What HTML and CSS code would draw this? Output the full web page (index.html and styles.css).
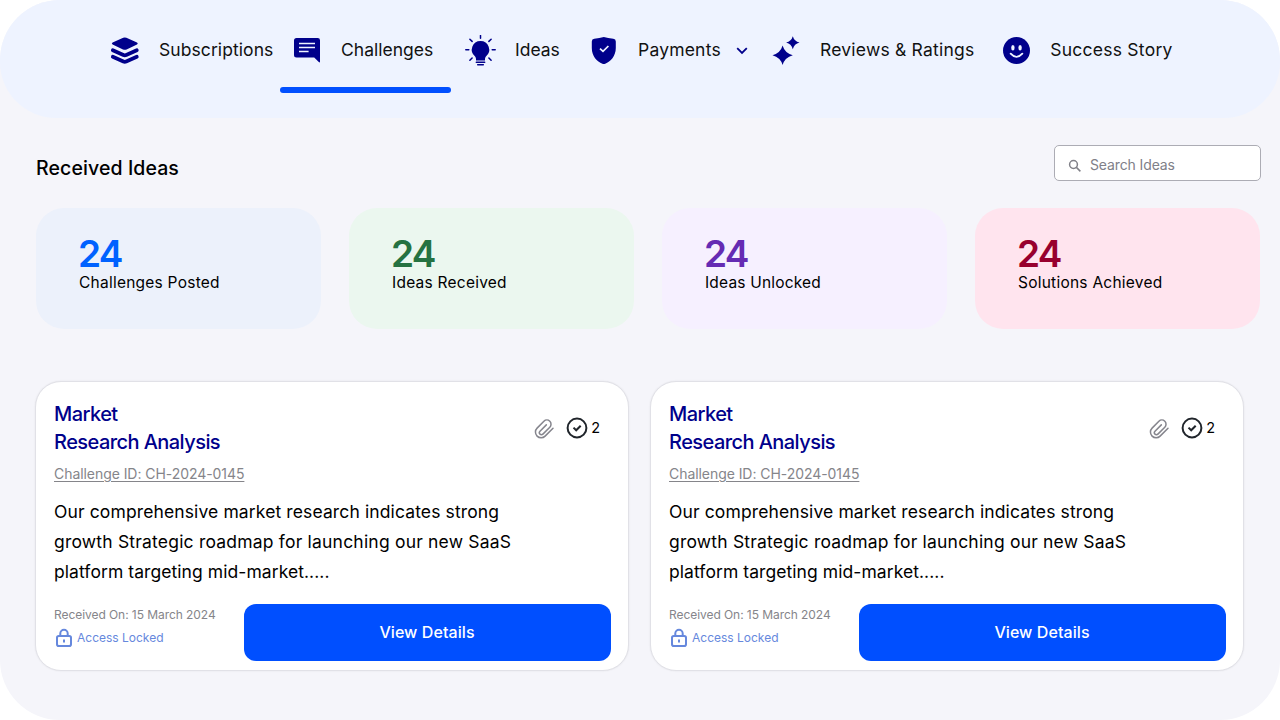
FILE: index.html
```html
<!DOCTYPE html>
<html lang="en">
<head>
<meta charset="utf-8">
<title>Received Ideas</title>
<link rel="stylesheet" href="styles.css">
</head>
<body>
<div class="app">
  <nav class="nav">
    <a class="nav-item"><svg class="nav-icon" viewBox="0 0 30 32"><path d="M13.200 2.800Q14.800 2 16.400 2.800L27 7.400Q28.600 8.400 27 9.400L16.600 14.400Q14.800 15.200 13 14.400L2.600 9.400Q1 8.400 2.600 7.400Z"/><path d="M2.800 15.200L13.400 20Q14.800 20.600 16.200 20L26.800 15.200M2.800 21.700L13.400 26.500Q14.800 27.100 16.200 26.500L26.800 21.700" fill="none" stroke="#00008b" stroke-width="3.700" stroke-linecap="round"/></svg><span class="nav-label l-sub">Subscriptions</span></a>
    <a class="nav-item active"><svg class="nav-icon" viewBox="0 0 30 32"><path d="M4.500 3h21.200a2.300 2.300 0 0 1 2.300 2.300V26.600q0 1.600-1.200.5L22.200 22.500H4.500A2.500 2.500 0 0 1 2 20V5.500A2.500 2.500 0 0 1 4.500 3Z"/><path d="M7 8.600h16M7 12.600h16M7 16.600h9.600" stroke="#eef3ff" stroke-width="1.500"/></svg><span class="nav-label l-cha">Challenges</span></a>
    <a class="nav-item"><svg class="nav-icon bulb" viewBox="0 0 32 32"><path d="M15.500 6a8.700 8.700 0 0 1 5.400 15.500Q20 22.500 20 24v1.400h-9V24q0-1.500-.9-2.500A8.700 8.700 0 0 1 15.500 6Z"/><path d="M11.300 27.300h8.400M12.700 29.800h5.600M15.500.5v2.800M.8 14.700h3M27.200 14.700h3M4.900 4.200l2.200 2.200M26.100 4.200l-2.200 2.200M4.900 25.200l2.200-2.200M26.100 25.200l-2.200-2.200" fill="none" stroke="#00008b" stroke-width="1.500" stroke-linecap="round"/></svg><span class="nav-label l-ide">Ideas</span></a>
    <a class="nav-item"><svg class="nav-icon" viewBox="0 0 30 32"><path d="M13.800 2Q18 3.200 23.300 3.800Q25.800 4 25.800 6.500V13C25.800 21 20.500 26.800 15.200 28.800Q13.800 29.300 12.400 28.800C7 26.800 1.800 21 1.800 13V6.500Q1.800 4 4.300 3.800Q9.600 3.200 13.800 2Z"/><path d="M10 13.600l3 2.800 5.400-5.400" fill="none" stroke="#eef3ff" stroke-width="1.700"/></svg><span class="nav-label l-pay">Payments</span><svg class="chevron" viewBox="0 0 14 10"><path d="M2.200 2.200L7 7l4.800-4.800" fill="none" stroke="#00008b" stroke-width="1.800"/></svg></a>
    <a class="nav-item"><svg class="nav-icon" viewBox="0 0 30 32"><path d="M10.600 10.500Q12.700 18 20.800 20.200Q12.700 22.400 10.600 30Q8.500 22.400.500 20.200Q8.500 18 10.600 10.500ZM20.800 1.200Q22.200 6.200 27.500 7.600Q22.200 9 20.800 14.200Q19.400 9 14.100 7.600Q19.400 6.200 20.800 1.200Z"/></svg><span class="nav-label l-rev">Reviews &amp; Ratings</span></a>
    <a class="nav-item"><svg class="nav-icon" viewBox="0 0 30 32"><circle cx="14.500" cy="15.500" r="13.500"/><ellipse cx="10.900" cy="12.800" rx="1.700" ry="2.800" fill="#eef3ff"/><ellipse cx="18.100" cy="12.800" rx="1.700" ry="2.800" fill="#eef3ff"/><path d="M8.700 18.700q5.800 6.400 11.600 0" fill="none" stroke="#eef3ff" stroke-width="1.900" stroke-linecap="round"/></svg><span class="nav-label l-suc">Success Story</span></a>
  </nav>
  <main class="main">
    <header class="head">
      <h1 class="title">Received Ideas</h1>
      <div class="search"><svg class="search-icon" viewBox="0 0 14 14"><circle cx="5.500" cy="5.500" r="3.900"/><path d="M8.400 8.400l4 4"/></svg><span class="search-text">Search Ideas</span></div>
    </header>
    <section class="stats">
      <div class="stat blue"><strong class="num">24</strong><span class="stat-label">Challenges Posted</span></div>
      <div class="stat green"><strong class="num">24</strong><span class="stat-label">Ideas Received</span></div>
      <div class="stat purple"><strong class="num">24</strong><span class="stat-label">Ideas Unlocked</span></div>
      <div class="stat pink"><strong class="num">24</strong><span class="stat-label">Solutions Achieved</span></div>
    </section>
    <section class="cards">
      <article class="card">
        <div class="card-top">
          <h2 class="card-title">Market<br>Research Analysis</h2>
          <div class="meta"><svg class="clip" viewBox="0 0 20 22"><path d="M19 10.200l-7.900 7.900a5.600 5.600 0 0 1-8-8l6.800-6.800a4.100 4.100 0 0 1 5.900 5.900l-6.900 6.900a2 2 0 0 1-2.900-2.900l6.300-6.300"/></svg><svg class="check" viewBox="0 0 22 22"><circle cx="11" cy="11" r="9.400"/><path d="M7.500 10.600l2.700 2.700 4.500-4.500"/></svg><span class="count">2</span></div>
        </div>
        <a class="cid">Challenge ID: CH-2024-0145</a>
        <p class="desc"><span class="d1">Our comprehensive market research indicates strong</span><br><span class="d2">growth Strategic roadmap for launching our new SaaS</span><br><span class="d3">platform targeting mid-market.....</span></p>
        <div class="card-foot">
          <div class="info"><span class="date">Received On: 15 March 2024</span><span class="locked"><svg class="lock" viewBox="0 0 18 20"><rect x="2" y="8" width="14" height="10" rx="1.800"/><path d="M5.300 8V5.500a3.700 3.700 0 0 1 7.400 0V8M9 11.500v3"/></svg><span class="locked-text">Access Locked</span></span></div>
          <button class="btn">View Details</button>
        </div>
      </article>
      <article class="card">
        <div class="card-top">
          <h2 class="card-title">Market<br>Research Analysis</h2>
          <div class="meta"><svg class="clip" viewBox="0 0 20 22"><path d="M19 10.200l-7.900 7.900a5.600 5.600 0 0 1-8-8l6.800-6.800a4.100 4.100 0 0 1 5.900 5.900l-6.900 6.900a2 2 0 0 1-2.900-2.900l6.300-6.300"/></svg><svg class="check" viewBox="0 0 22 22"><circle cx="11" cy="11" r="9.400"/><path d="M7.500 10.600l2.700 2.700 4.500-4.500"/></svg><span class="count">2</span></div>
        </div>
        <a class="cid">Challenge ID: CH-2024-0145</a>
        <p class="desc"><span class="d1">Our comprehensive market research indicates strong</span><br><span class="d2">growth Strategic roadmap for launching our new SaaS</span><br><span class="d3">platform targeting mid-market.....</span></p>
        <div class="card-foot">
          <div class="info"><span class="date">Received On: 15 March 2024</span><span class="locked"><svg class="lock" viewBox="0 0 18 20"><rect x="2" y="8" width="14" height="10" rx="1.800"/><path d="M5.300 8V5.500a3.700 3.700 0 0 1 7.400 0V8M9 11.500v3"/></svg><span class="locked-text">Access Locked</span></span></div>
          <button class="btn">View Details</button>
        </div>
      </article>
    </section>
  </main>
</div>
</body>
</html>
```
FILE: styles.css
```css
* { box-sizing: border-box; }
body { margin: 0; background: #fff; font-family: Inter, "Liberation Sans", sans-serif; color: #000; }
.app { width: 1280px; height: 720px; background: #f5f5fa; border-radius: 60px; overflow: hidden; }
.nav { height: 118px; background: #eef3ff; border-radius: 56px; padding-left: 110px; display: grid; grid-template-columns: 182px 173px 125px 182px 230px 200px; }
.nav-item { height: 93px; padding-top: 34px; display: flex; align-items: flex-start; position: relative; white-space: nowrap; }
.nav-item.active::after { content: ""; position: absolute; left: -12px; bottom: 0; width: 171.400px; height: 6px; border-radius: 3px; background: #004fff; }
.nav-icon { width: 30px; height: 32px; flex: none; margin-right: 19px; margin-top: 1px; fill: #00008b; }
.bulb { width: 32px; margin-right: 18px; }
.nav-label { font-size: 17.500px; line-height: 32px; color: #111; }
.l-sub { letter-spacing: .08px; }
.l-pay { letter-spacing: .2px; margin-left: -1px; }
.l-rev { letter-spacing: .21px; margin-left: -1px; }
.l-suc { letter-spacing: .25px; margin-left: -.8px; }
.chevron { width: 14px; height: 10px; margin: 12px 0 0 14px; }
.main { padding: 27px 19px 0 36px; }
.head { height: 36px; display: flex; justify-content: space-between; align-items: center; }
.title { margin: 10px 0 0; font-size: 19.500px; line-height: 28px; font-weight: 500; letter-spacing: .1px; }
.search { width: 207px; height: 36px; border: 1px solid #acacb4; border-radius: 5px; background: #fff; display: flex; align-items: center; padding: 4px 0 0 13px; gap: 8px; }
.search-icon { width: 14px; height: 14px; margin-top: 2px; fill: none; stroke: #808088; stroke-width: 1.500; }
.search-text { font-size: 14px; line-height: 20px; color: #808088; letter-spacing: -.12px; }
.stats { margin: 27px 1px 0 0; display: grid; grid-template-columns: repeat(4, 285px); justify-content: space-between; }
.stat { height: 121px; border-radius: 28px; padding: 27px 0 0 43px; display: flex; flex-direction: column; }
.num { font-size: 37px; line-height: 38px; font-weight: 600; letter-spacing: -1.800px; margin-left: -1px; }
.stat-label { font-size: 15.500px; line-height: 20px; letter-spacing: .24px; }
.blue { background: #ecf1fb; } .blue .num { color: #0062ff; }
.green { background: #ebf7ef; } .green .num { color: #257241; }
.purple { background: #f6f0ff; } .purple .num { color: #652bb3; } .purple .stat-label { letter-spacing: .18px; }
.pink { background: #ffe4ee; } .pink .num { color: #98002e; }
.cards { margin: 52px 17px 0 -1px; display: flex; justify-content: space-between; }
.card { width: 594px; height: 290px; border: 1px solid #e1e1e7; border-radius: 26px; background: #fff; padding: 18px 17px 0 18px; box-shadow: 0 0 2px rgba(0, 0, 0, .08); }
.card-top { display: flex; justify-content: space-between; }
.card-title { margin: 0; font-size: 20px; line-height: 28px; font-weight: 500; color: #00008b; letter-spacing: -.56px; }
.meta { display: flex; align-items: center; height: 22px; margin: 17px 11px 0 0; }
.clip { width: 20px; height: 22px; margin: 2px 12px 0 0; fill: none; stroke: #85858d; stroke-width: 1.500; stroke-linecap: round; }
.check { width: 22px; height: 22px; fill: none; stroke: #20252b; stroke-width: 2; }
.count { font-size: 14.500px; margin-left: 3px; line-height: 22px; letter-spacing: -.1px; }
.cid { display: inline-block; margin-top: 8px; font-size: 14px; line-height: 20px; color: #85858a; text-decoration: underline; text-underline-offset: 2px; letter-spacing: -.06px; }
.desc { margin: 13px 0 0; font-size: 17.500px; line-height: 30px; white-space: nowrap; }
.d1 { letter-spacing: .12px; }
.d2 { letter-spacing: .2px; }
.d3 { letter-spacing: .07px; }
.card-foot { margin-top: 17px; display: flex; justify-content: space-between; }
.info { display: flex; flex-direction: column; padding-top: 2px; white-space: nowrap; }
.date { font-size: 12px; line-height: 18px; color: #85858a; letter-spacing: -.06px; }
.locked { display: flex; align-items: center; margin-top: 4px; color: #6688dd; }
.lock { width: 18px; height: 20px; margin: 0 4px 0 1px; fill: none; stroke: #6688dd; stroke-width: 2; }
.locked-text { font-size: 12px; line-height: 18px; }
.btn { width: 367px; height: 57px; border: 0; border-radius: 12px; background: #004fff; color: #fff; padding: 0 1px 1px 0; font: 500 16px/24px Inter, sans-serif; letter-spacing: .08px; }
```
